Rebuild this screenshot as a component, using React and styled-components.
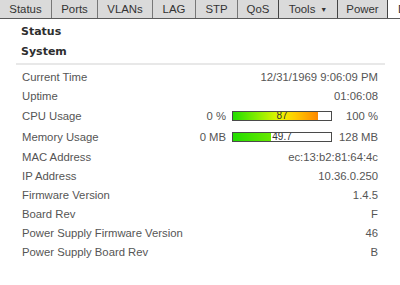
import React from "react";
import styled, { createGlobalStyle } from "styled-components";

const Global = createGlobalStyle`
  html, body { margin: 0; padding: 0; background: #fff; }
  body { font-family: "Liberation Sans", Arial, sans-serif; width: 400px; height: 285px; overflow: hidden; }
`;

const TabBar = styled.div`
  display: flex;
  height: 18px;
  background: #dadada;
  border-bottom: 1px solid #5a5a5a;
  white-space: nowrap;
  overflow: hidden;
`;

const Tab = styled.div`
  flex: none;
  display: flex;
  align-items: center;
  height: 18px;
  padding: 0 ${(p) => (p.$first ? "9px 0 9px" : "10px")};
  border-right: 1px solid ${(p) => (p.$dark ? "#444" : "#777")};
  background: ${(p) => (p.$active ? "#fff" : "transparent")};
  font-size: 11.4px;
  color: #333;
  width: ${(p) => (p.$w ? p.$w + "px" : "auto")};
  box-sizing: border-box;
  justify-content: ${(p) => (p.$active ? "flex-start" : "center")};
`;

const Caret = styled.span`
  font-size: 7px;
  margin-left: 5px;
  color: #333;
`;

const Content = styled.div`
  margin-left: 16px;
  width: 369px;
`;

const Heading = styled.div`
  font-family: "DejaVu Sans", Verdana, sans-serif;
  font-weight: bold;
  font-size: 11px;
  color: #2e2e2e;
  padding-left: 5px;
  height: 20px;
  line-height: 20px;
`;

const TopHeading = styled(Heading)`
  margin-top: 3px;
`;

const Divider = styled.div`
  height: 2px;
  background: #e8e8e8;
  margin-top: 1px;
  margin-bottom: 2px;
`;

const Row = styled.div`
  display: flex;
  align-items: center;
  justify-content: space-between;
  height: ${(p) => (p.$tall ? 21 : 19)}px;
  padding: 0 7px 0 6px;
  font-size: 11.3px;
  color: #555;
`;

const Label = styled.span``;
const Value = styled.span``;

const Meter = styled.div`
  display: grid;
  grid-template-columns: auto 100px 40px;
  column-gap: 6px;
  align-items: center;
`;

const MinText = styled.span`
  text-align: right;
`;
const MaxText = styled.span`
  text-align: right;
`;

const Bar = styled.div`
  position: relative;
  height: 10px;
  border: 1px solid #4a4a4a;
  background: #fff;
  box-sizing: border-box;
  overflow: hidden;
`;

const Fill = styled.div`
  height: 100%;
  background-image: linear-gradient(
    to right,
    #22dd00 0%,
    #88ee00 22%,
    #eef500 42%,
    #ffcc00 55%,
    #ff9900 70%,
    #ee3a00 100%
  );
  background-repeat: no-repeat;
`;

const BarText = styled.span`
  position: absolute;
  left: 0;
  right: 0;
  top: -2px;
  text-align: center;
  font-size: 10px;
  line-height: 12px;
  color: #333;
`;

function Usage({ min, max, value, pct }) {
  return (
    <Meter>
      <MinText>{min}</MinText>
      <Bar>
        <Fill style={{ width: pct + "%", backgroundSize: `${98 / (pct / 100)}px 100%` }} />
        <BarText>{value}</BarText>
      </Bar>
      <MaxText>{max}</MaxText>
    </Meter>
  );
}

const tabs = [
  { t: "Status", first: true, w: 52 },
  { t: "Ports", w: 46 },
  { t: "VLANs", w: 55 },
  { t: "LAG", w: 43 },
  { t: "STP", w: 42 },
  { t: "QoS", w: 41, dark: true },
  { t: "Tools", caret: true, w: 59, dark: true },
  { t: "Power", w: 50, dark: true },
];

const rows = [
  ["Current Time", "12/31/1969 9:06:09 PM"],
  ["Uptime", "01:06:08"],
  ["CPU Usage", { min: "0 %", max: "100 %", value: "87", pct: 87 }],
  ["Memory Usage", { min: "0 MB", max: "128 MB", value: "49.7", pct: 38.8 }],
  ["MAC Address", "ec:13:b2:81:64:4c"],
  ["IP Address", "10.36.0.250"],
  ["Firmware Version", "1.4.5"],
  ["Board Rev", "F"],
  ["Power Supply Firmware Version", "46"],
  ["Power Supply Board Rev", "B"],
];

export default function App() {
  return (
    <>
      <Global />
      <TabBar>
        {tabs.map((tb) => (
          <Tab key={tb.t} $w={tb.w} $dark={tb.dark}>
            {tb.t}
            {tb.caret && <Caret>▼</Caret>}
          </Tab>
        ))}
        <Tab $active $w={12}>D</Tab>
      </TabBar>
      <Content>
        <TopHeading>Status</TopHeading>
        <Heading>System</Heading>
        <Divider />
        {rows.map(([label, val]) => (
          <Row key={label} $tall={typeof val !== "string"}>
            <Label>{label}</Label>
            {typeof val === "string" ? <Value>{val}</Value> : <Usage {...val} />}
          </Row>
        ))}
      </Content>
    </>
  );
}
